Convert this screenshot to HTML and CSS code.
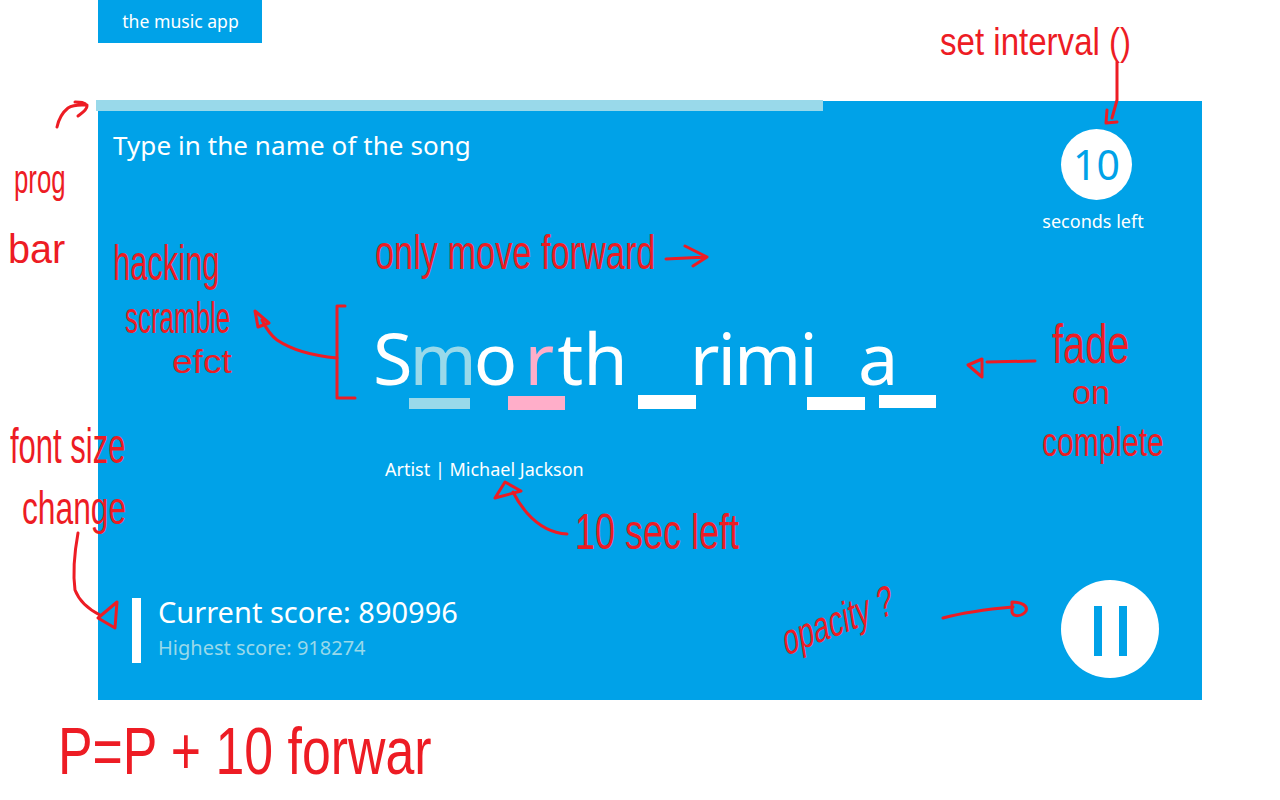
FILE: index.html
```html
<!DOCTYPE html>
<html lang="en">

<head>
    <meta charset="UTF-8">
    <meta name="viewport" content="width=device-width, initial-scale=1.0">
    <title>the music app</title>
    <link rel="stylesheet" href="styles.css">
</head>

<body>
    <div class="app">
        <div class="tab">the music app</div>

        <div class="panel">
            <div class="progress"></div>

            <div class="top">
                <h1 class="prompt">Type in the name of the song</h1>
                <div class="timer">
                    <div class="count">10</div>
                    <div class="count-label">seconds left</div>
                </div>
            </div>

            <div class="game">
                <div class="word">S<span class="hit">m</span>o<span class="miss">r</span>th<span class="part-two">rimi</span><span class="part-three">a</span></div>
                <div class="blanks">
                    <div class="blank blank-hit"></div>
                    <div class="blank blank-miss"></div>
                    <div class="blank blank-c"></div>
                    <div class="blank blank-n"></div>
                    <div class="blank blank-l"></div>
                </div>
                <p class="artist">Artist | Michael Jackson</p>
            </div>

            <div class="bottom">
                <div class="score">
                    <div class="score-bar"></div>
                    <div>
                        <div class="score-now">Current score: 890996</div>
                        <div class="score-best">Highest score: 918274</div>
                    </div>
                </div>
                <div class="pause">
                    <div class="pause-bar"></div>
                    <div class="pause-bar"></div>
                </div>
            </div>
        </div>
    </div>

    <!-- red pen notes drawn over the mockup -->
    <div class="notes">
        <svg class="pen" width="1280" height="800" viewBox="0 0 1280 800">
            <path d="M57 127 C59 118 63 112 68 108 C74 104 80 105 87 105 M75 102 C80 102 85 102 87 106 C87 110 82 113 78 116"/>
            <path d="M345 306 L337 306 L337 398 L355 398"/>
            <path d="M337 358 C315 356 295 352 277 340 C270 335 266 328 262 320 M255 311 L258 327 L269 323 Z"/>
            <path d="M1117 62 L1117 100 L1112 118 M1107 110 L1106 123 L1117 122"/>
            <path d="M1035 361 L987 362 M982 359 L968 365 L982 377 Z"/>
            <path d="M78 533 C74 555 73 575 75 590 C80 603 90 610 100 615 M117 602 L98 618 L115 628 Z"/>
            <path d="M567 534 C548 533 535 522 527 513 C521 506 517 500 513 492 M505 482 L495 498 L521 491 Z"/>
            <path d="M943 618 C965 612 990 609 1013 607 M1012 602 C1022 602 1028 606 1026 611 C1022 617 1013 617 1012 612 Z"/>
            <path d="M666 259 L707 257 M685 246 L707 257 L693 266"/>
        </svg>
        <span class="note note-interval">set interval ()</span>
        <span class="note note-prog">prog</span>
        <span class="note note-bar">bar</span>
        <span class="note note-hacking">hacking</span>
        <span class="note note-scramble">scramble</span>
        <span class="note note-effect">efct</span>
        <span class="note note-forward">only move forward</span>
        <span class="note note-fade">fade</span>
        <span class="note note-on">on</span>
        <span class="note note-complete">complete</span>
        <span class="note note-font">font size</span>
        <span class="note note-change">change</span>
        <span class="note note-secs">10 sec left</span>
        <span class="note note-opacity">opacity ?</span>
        <span class="note note-formula">P=P + 10 forwar</span>
    </div>
</body>

</html>
```

FILE: styles.css
```css
/* the music app mockup */
body {
    font-family: "Noto Sans", sans-serif;
    margin: 0;
    background: #fff;
    color: #fff;
}

.app {
    width: 1104px;
    margin-left: 98px;
}

.tab {
    box-sizing: border-box;
    width: 164px;
    height: 43px;
    padding-left: 1px;
    line-height: 42px;
    text-align: center;
    font-size: 17.6px;
    background: #00a2e8;
}

.panel {
    height: 599px;
    margin-top: 58px;
    background: #00a2e8;
    display: flex;
    flex-direction: column;
}

.progress {
    width: 727px;
    height: 11px;
    margin: -1px 0 0 -2px;
    background: #99d9ea;
}

.top {
    display: flex;
    justify-content: space-between;
    align-items: flex-start;
    height: 190px;
    padding: 18px 57px 0 15px;
}

.prompt {
    margin: -2px 0 0;
    font-size: 26px;
    font-weight: 400;
    line-height: 36px;
    letter-spacing: 0.07px;
}

.timer {
    width: 104px;
    display: flex;
    flex-direction: column;
    align-items: center;
}

.count {
    width: 71px;
    height: 71px;
    margin-left: 7px;
    border-radius: 50%;
    background: #fff;
    color: #00a2e8;
    font-size: 41px;
    line-height: 71px;
    text-align: center;
}

.count-label {
    margin-top: 9px;
    font-size: 18px;
    line-height: 24px;
    white-space: nowrap;
}

.game {
    height: 261px;
    padding-left: 275px;
}

.word {
    font-size: 72px;
    line-height: 76px;
    white-space: nowrap;
}

.hit {
    margin: 0 -3px;
    color: #99d9ea;
}

.miss {
    margin: 0 3px 0 7px;
    color: #ffaec9;
}

.part-two {
    margin-left: 62px;
    letter-spacing: -2px;
}

.part-three {
    margin-left: 42px;
}

.blanks {
    display: flex;
    align-items: flex-start;
    margin-left: 36px;
}

.blank {
    width: 58px;
    height: 14px;
    background: #fff;
}

.blank-hit {
    width: 61px;
    height: 11px;
    margin-top: 3px;
    background: #99d9ea;
}

.blank-miss {
    width: 57px;
    margin: 1px 0 0 38px;
    background: #ffaec9;
}

.blank-c {
    margin-left: 73px;
}

.blank-n {
    margin: 2px 0 0 111px;
    height: 13px;
}

.blank-l {
    width: 57px;
    height: 13px;
    margin-left: 14px;
}

.artist {
    margin: 47px 0 0 12px;
    font-size: 18px;
    line-height: 24px;
}

.bottom {
    display: flex;
    justify-content: space-between;
    align-items: flex-start;
    padding: 0 43px 0 34px;
}

.score {
    display: flex;
    gap: 17px;
    margin-top: 18px;
}

.score-bar {
    width: 9px;
    height: 65px;
    background: #fff;
}

.score-now {
    margin-top: -1px;
    font-size: 29px;
    line-height: 30px;
}

.score-best {
    margin-top: 7px;
    font-size: 20px;
    line-height: 28px;
    color: #99d9ea;
}

.pause {
    box-sizing: border-box;
    width: 98px;
    height: 98px;
    padding-top: 4px;
    border-radius: 50%;
    background: #fff;
    display: flex;
    justify-content: center;
    align-items: center;
    gap: 17px;
}

.pause-bar {
    width: 8px;
    height: 50px;
    background: #00a2e8;
}

/* pen layer */
.notes {
    position: absolute;
    top: 0;
    left: 0;
    width: 1280px;
    height: 800px;
    overflow: hidden;
    pointer-events: none;
}

.pen {
    position: absolute;
    top: 0;
    left: 0;
}

.pen path {
    fill: none;
    stroke: #ed1c24;
    stroke-width: 3;
    stroke-linecap: round;
    stroke-linejoin: round;
}

.note {
    position: absolute;
    color: #ed1c24;
    font-family: "Liberation Sans", sans-serif;
    line-height: 0.9;
    white-space: nowrap;
    transform-origin: left top;
}

.note-interval {
    left: 940px;
    top: 25px;
    font-size: 38px;
    transform: scaleX(0.87);
}

.note-prog {
    left: 14px;
    top: 161px;
    font-size: 40px;
    transform: scaleX(0.645);
}

.note-bar {
    left: 8px;
    top: 231px;
    font-size: 40px;
    transform: scaleX(0.99);
}

.note-hacking {
    left: 113px;
    top: 241px;
    font-size: 50px;
    transform: scaleX(0.618);
}

.note-scramble {
    left: 125px;
    top: 298px;
    font-size: 44px;
    transform: scaleX(0.59);
}

.note-effect {
    left: 172px;
    top: 346px;
    font-size: 34px;
    transform: scaleX(1.09);
}

.note-forward {
    left: 375px;
    top: 231px;
    font-size: 48px;
    transform: scaleX(0.715);
}

.note-fade {
    left: 1052px;
    top: 319px;
    font-size: 56px;
    transform: scaleX(0.71);
}

.note-on {
    left: 1072px;
    top: 377px;
    font-size: 34px;
}

.note-complete {
    left: 1042px;
    top: 424px;
    font-size: 40px;
    transform: scaleX(0.75);
}

.note-font {
    left: 10px;
    top: 424px;
    font-size: 50px;
    transform: scaleX(0.62);
}

.note-change {
    left: 22px;
    top: 488px;
    font-size: 46px;
    transform: scaleX(0.69);
}

.note-secs {
    left: 575px;
    top: 510px;
    font-size: 50px;
    transform: scaleX(0.72);
}

.note-opacity {
    left: 780px;
    top: 622px;
    font-size: 44px;
    transform: scaleX(0.64) rotate(-14deg);
}

.note-formula {
    left: 58px;
    top: 722px;
    font-size: 66px;
    transform: scaleX(0.785);
}
```
